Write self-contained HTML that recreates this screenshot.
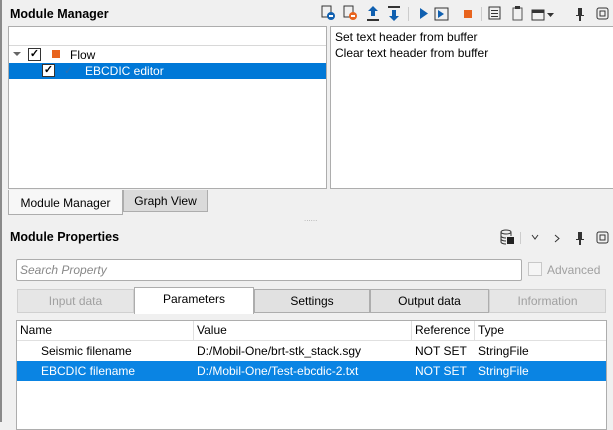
<!DOCTYPE html>
<html><head><style>
*{box-sizing:border-box;margin:0;padding:0}
body{width:613px;height:422px;background:#f0f0f0;font-family:"Liberation Sans",sans-serif;font-size:12px;color:#000;position:relative;overflow:hidden}
.a{position:absolute}
.b{font-weight:bold;font-size:12.5px}
.pane{background:#fff;border:1px solid #adadad}
.tab{position:absolute;border:1px solid #adadad;background:#e1e1e1;text-align:center;line-height:22px}
.dis{color:#a0a0a0;background:#e6e6e6;border-color:#d0d0d0}
.cb{position:absolute;width:13px;height:13px;border:1px solid #333;background:#fff;font-size:11px;line-height:11px;text-align:center;font-weight:bold}
</style></head><body>
<div class="a" style="left:0;top:0;width:2px;height:422px;background:#8a8a8a"></div>
<div class="a b" style="left:10px;top:7px">Module Manager</div>
<!-- toolbar -->
<svg class="a" style="left:318px;top:3px" width="295" height="22" viewBox="0 0 295 22">
<g fill="#333"><rect x="4" y="3" width="9" height="11" fill="none" stroke="#333"/><circle cx="13" cy="13" r="4" fill="#1060b0"/><rect x="11" y="12" width="4" height="2" fill="#fff"/>
<rect x="26" y="3" width="9" height="11" fill="none" stroke="#333"/><circle cx="35" cy="13" r="4" fill="#e8641e"/><rect x="33" y="12" width="4" height="2" fill="#fff"/>
<path d="M55 3l5 5h-3v5h-4v-5h-3z" fill="#1060b0"/><rect x="49" y="16" width="12" height="2"/>
<rect x="70" y="3" width="12" height="2"/><path d="M76 18l5-5h-3v-6h-4v6h-3z" fill="#1060b0"/>
<rect x="90" y="4" width="1" height="14" fill="#ccc"/>
<path d="M102 5l8 5.5-8 5.5z" fill="#1060b0"/>
<rect x="117" y="5" width="13" height="12" fill="none" stroke="#333"/><path d="M120 7l6 4-6 4z" fill="#1060b0"/>
<rect x="146" y="7" width="8" height="8" fill="#e8641e"/>
<rect x="163" y="4" width="1" height="14" fill="#ccc"/>
<rect x="171" y="4" width="11" height="12" fill="none" stroke="#333"/><rect x="173" y="7" width="7" height="1"/><rect x="173" y="10" width="7" height="1"/><rect x="173" y="13" width="7" height="1"/>
<rect x="195" y="5" width="9" height="12" fill="none" stroke="#555"/><rect x="197" y="3" width="5" height="3"/>
<rect x="214" y="7" width="12" height="10" fill="none" stroke="#333"/><rect x="214" y="7" width="12" height="3"/>
<path d="M229 10h7l-3.5 4z"/>
<rect x="260" y="5" width="4" height="7"/><rect x="258" y="12" width="8" height="1"/><rect x="261" y="13" width="2" height="5"/>
<rect x="279" y="5" width="11" height="11" rx="2" fill="none" stroke="#333"/><rect x="282" y="8" width="5" height="5" fill="none" stroke="#333"/></g>
</svg>
<!-- left pane -->
<div class="a pane" style="left:8px;top:26px;width:319px;height:163px">
<div style="height:19px;border-bottom:1px solid #d8d8d8;background:#fff"></div>
<div class="a" style="left:4px;top:25px;width:0;height:0;border-left:4px solid transparent;border-right:4px solid transparent;border-top:4px solid #666"></div>
<div class="cb" style="left:19px;top:21px">✓</div>
<div class="a" style="left:43px;top:23px;width:8px;height:8px;background:#e8641e"></div>
<div class="a" style="left:61px;top:21px">Flow</div>
<div class="a" style="left:0;top:36px;width:317px;height:16px;background:#0078d7"></div>
<div class="cb" style="left:33px;top:37px">✓</div>
<div class="a" style="left:55px;top:37px;color:#2d6fb0;font-size:11px">✓</div>
<div class="a" style="left:76px;top:37px;color:#fff">EBCDIC editor</div>
</div>
<div class="a pane" style="left:330px;top:26px;width:284px;height:163px;padding:2px 4px;line-height:16px">Set text header from buffer<br>Clear text header from buffer</div>
<div class="tab" style="left:8px;top:190px;width:115px;height:25px;background:#f7f7f7;border-top:none;line-height:27px">Module Manager</div>
<div class="tab" style="left:123px;top:190px;width:85px;height:22px;background:#dadada;border-top:none">Graph View</div>
<div class="a" style="left:304px;top:214px;color:#aaa;font-size:8px">......</div>
<div class="a b" style="left:10px;top:230px">Module Properties</div>
<svg class="a" style="left:498px;top:228px" width="115" height="20"><g fill="none" stroke="#333"><ellipse cx="8" cy="4" rx="5" ry="2"/><path d="M3 4v10c0 1 2 2 5 2M13 4v4"/><path d="M3 8c0 1 2 2 5 2M3 11c0 1 2 2 5 2"/><path d="M34 7l3 4 3-4M57 7l4 3.5-4 3.5"/><rect x="99" y="4" width="11" height="11" rx="2"/><rect x="102" y="7" width="5" height="5"/></g><rect x="9" y="9" width="7" height="7" fill="#222"/><rect x="80" y="4" width="4" height="7" fill="#333"/><rect x="78" y="11" width="8" height="1" fill="#333"/><rect x="81" y="12" width="2" height="5" fill="#333"/><rect x="22" y="4" width="1" height="12" fill="#ccc"/></svg>
<div class="a" style="left:16px;top:259px;width:506px;height:22px;background:#fff;border:1px solid #adadad;border-radius:2px;padding-left:3px;line-height:20px;color:#888;font-style:italic">Search Property</div>
<div class="a" style="left:528px;top:262px;width:14px;height:14px;border:1px solid #c8c8c8;background:#f5f5f5"></div>
<div class="a" style="left:547px;top:263px;color:#a0a0a0">Advanced</div>
<div class="tab dis" style="left:17px;top:289px;width:117px;height:24px">Input data</div>
<div class="tab" style="left:134px;top:287px;width:120px;height:27px;background:#fff;border-bottom:none">Parameters</div>
<div class="tab" style="left:254px;top:289px;width:116px;height:24px">Settings</div>
<div class="tab" style="left:370px;top:289px;width:119px;height:24px">Output data</div>
<div class="tab dis" style="left:489px;top:289px;width:117px;height:24px">Information</div>
<div class="a pane" style="left:16px;top:320px;width:591px;height:110px">
<div style="height:20px;border-bottom:1px solid #e0e0e0;position:relative;line-height:19px">
<span class="a" style="left:3px">Name</span><span class="a" style="left:176px;border-left:1px solid #e0e0e0;padding-left:3px;height:20px">Value</span><span class="a" style="left:394px;border-left:1px solid #e0e0e0;padding-left:3px;height:20px">Reference</span><span class="a" style="left:457px;border-left:1px solid #e0e0e0;padding-left:3px;height:20px">Type</span></div>
<div style="height:20px;position:relative;line-height:20px"><span class="a" style="left:24px">Seismic filename</span><span class="a" style="left:180px">D:/Mobil-One/brt-stk_stack.sgy</span><span class="a" style="left:398px">NOT SET</span><span class="a" style="left:461px">StringFile</span></div>
<div style="height:20px;position:relative;line-height:20px;background:#0a84e3;color:#fff"><span class="a" style="left:24px">EBCDIC filename</span><span class="a" style="left:180px">D:/Mobil-One/Test-ebcdic-2.txt</span><span class="a" style="left:398px">NOT SET</span><span class="a" style="left:461px">StringFile</span></div>
</div>
</body></html>
